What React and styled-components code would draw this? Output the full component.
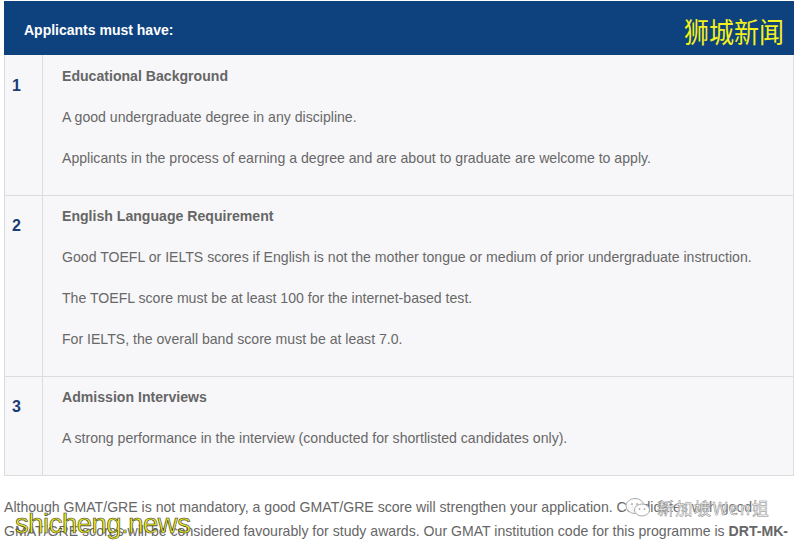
import React from 'react';
import styled, { createGlobalStyle } from 'styled-components';

const GlobalStyle = createGlobalStyle`
  html, body {
    margin: 0;
    padding: 0;
    background: #ffffff;
    overflow: hidden;
  }
  body {
    font-family: "Liberation Sans", Arial, sans-serif;
  }
`;

const Page = styled.div`
  position: relative;
  width: 800px;
  height: 543px;
  padding: 1px 6px 0 4px;
  box-sizing: border-box;
  overflow: hidden;
`;

const Table = styled.div`
  border: 1px solid #dcdcdf;
  border-top: none;
  background: #f7f7f9;
`;

const Header = styled.div`
  display: flex;
  align-items: center;
  justify-content: space-between;
  height: 54px;
  margin: 0 -1px;
  padding: 0 10px 0 20px;
  background: #0e427e;
`;

const HeaderTitle = styled.div`
  color: #ffffff;
  font-size: 14px;
  font-weight: bold;
  padding-top: 3px;
`;

const Brand = styled.div`
  color: #f4f01c;
  font-family: "Noto Sans CJK SC", sans-serif;
  font-size: 25px;
  transform: scaleY(1.12);
  padding-top: 3px;
`;

const Row = styled.div`
  display: grid;
  grid-template-columns: 38px 1fr;
  border-top: ${(p) => (p.first ? 'none' : '1px solid #dcdcdf')};
`;

const Num = styled.div`
  border-right: 1px solid #dcdcdf;
  color: #1b3c73;
  font-size: 16px;
  font-weight: bold;
  line-height: 20px;
  padding: ${(p) => (p.first ? '21px' : '20px')} 0 0 7px;
`;

const Cell = styled.div`
  padding: ${(p) => (p.first ? '11px' : '10px')} 20px 27px 19px;
  color: #686868;
  font-size: 14.1px;
`;

const Title = styled.div`
  font-weight: bold;
  line-height: 20px;
  color: #666666;
`;

const Para = styled.p`
  margin: 21px 0 0;
  line-height: 20px;
`;

const Footer = styled.p`
  margin: 19px 0 0;
  color: #666666;
  font-size: 14.1px;
  line-height: 24px;
  white-space: nowrap;
`;

const Mark = styled.div`
  position: absolute;
  left: 15px;
  top: 508px;
  font-size: 27.5px;
  color: #e8e81e;
  letter-spacing: -0.5px;
  -webkit-text-stroke: 0.6px #333;
  font-family: "Liberation Sans", sans-serif;
`;

const WeChat = styled.div`
  position: absolute;
  left: 625px;
  top: 495px;
  display: flex;
  align-items: center;
  gap: 6px;
  color: rgba(255, 255, 255, 0.9);
  font-family: "Noto Sans CJK SC", sans-serif;
  font-size: 17px;
  letter-spacing: 1.5px;
  -webkit-text-stroke: 0.5px #888;
  text-shadow: 0 0 3px rgba(255, 255, 255, 0.8);
`;

const rows = [
  {
    n: 1,
    title: 'Educational Background',
    paras: [
      'A good undergraduate degree in any discipline.',
      'Applicants in the process of earning a degree and are about to graduate are welcome to apply.',
    ],
  },
  {
    n: 2,
    title: 'English Language Requirement',
    paras: [
      'Good TOEFL or IELTS scores if English is not the mother tongue or medium of prior undergraduate instruction.',
      'The TOEFL score must be at least 100 for the internet-based test.',
      'For IELTS, the overall band score must be at least 7.0.',
    ],
  },
  {
    n: 3,
    title: 'Admission Interviews',
    paras: ['A strong performance in the interview (conducted for shortlisted candidates only).'],
  },
];

export default function App() {
  return (
    <>
      <GlobalStyle />
      <Page>
        <Table>
          <Header>
            <HeaderTitle>Applicants must have:</HeaderTitle>
            <Brand>狮城新闻</Brand>
          </Header>
          {rows.map((r, i) => (
            <Row key={r.n} first={i === 0}>
              <Num first={i === 0}>{r.n}</Num>
              <Cell first={i === 0}>
                <Title>{r.title}</Title>
                {r.paras.map((p) => (
                  <Para key={p}>{p}</Para>
                ))}
              </Cell>
            </Row>
          ))}
        </Table>
        <Footer>
          Although GMAT/GRE is not mandatory, a good GMAT/GRE score will strengthen your application. Candidates with good
          <br />
          GMAT/GRE scores will be considered favourably for study awards. Our GMAT institution code for this programme is{' '}
          <b>DRT-MK-</b>
        </Footer>
        <Mark>shicheng.news</Mark>
        <WeChat>
          <svg width="26" height="22" viewBox="0 0 26 22">
            <ellipse cx="10" cy="9" rx="9" ry="7.5" fill="rgba(255,255,255,0.9)" stroke="#aaa" strokeWidth="1" />
            <ellipse cx="17" cy="13" rx="7.5" ry="6" fill="#fff" stroke="#aaa" strokeWidth="1" />
            <circle cx="7" cy="7" r="0.9" fill="#aaa" />
            <circle cx="12" cy="7" r="0.9" fill="#aaa" />
            <circle cx="14.5" cy="12" r="0.9" fill="#aaa" />
            <circle cx="19.5" cy="12" r="0.9" fill="#aaa" />
          </svg>
          <span>新加坡Wen姐</span>
        </WeChat>
      </Page>
    </>
  );
}
